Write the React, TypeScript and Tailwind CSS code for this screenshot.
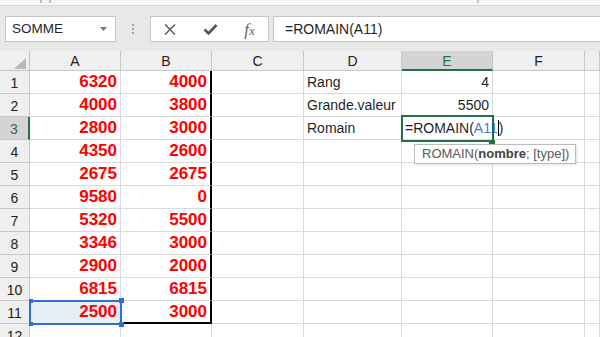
import React from 'react';

const dataA = [6320, 4000, 2800, 4350, 2675, 9580, 5320, 3346, 2900, 6815, 2500];
const dataB = [4000, 3800, 3000, 2600, 2675, 0, 5500, 3000, 2000, 6815, 3000];
const cols = ['A', 'B', 'C', 'D', 'E', 'F', ''];
const labels: Record<number, string> = { 1: 'Rang', 2: 'Grande.valeur', 3: 'Romain' };
const values: Record<number, string> = { 1: '4', 2: '5500' };

function Toolbar() {
  return (
    <div className="h-[51px] bg-[#e8e8e8] flex flex-col shrink-0">
      {/* ribbon edge */}
      <div className="relative h-[6px] overflow-hidden bg-[#f6f6f6] border-b border-[#d6d6d6]">
        <div className="absolute left-[40px] top-0 w-[2px] h-[3px] bg-[#bdbdbd]" />
        <div className="absolute left-[49px] top-0 w-[2px] h-[3px] bg-[#bdbdbd]" />
        <div className="absolute left-[477px] top-0 w-[2px] h-[3px] bg-[#c4c4c4]" />
      </div>

      <div className="flex items-start pt-[10px] pl-[5px]">
        {/* Name box */}
        <div className="w-[111px] h-[26px] bg-white border border-[#c6c6c6] flex items-center justify-between pl-[6px] pr-[8px]">
          <span className="text-[13.5px] text-[#262626]">SOMME</span>
          <svg width="7" height="4" viewBox="0 0 7 4">
            <polygon points="0,0 7,0 3.5,4" fill="#7a7a7a" />
          </svg>
        </div>

        <div className="w-[34px] h-[26px] flex flex-col items-center justify-center gap-[2px]">
          <div className="w-[2px] h-[2px] bg-[#a2a2a2]" />
          <div className="w-[2px] h-[2px] bg-[#a2a2a2]" />
          <div className="w-[2px] h-[2px] bg-[#a2a2a2]" />
        </div>

        {/* Cancel / enter / fx */}
        <div className="w-[119px] h-[26px] bg-white border border-[#c6c6c6] flex items-center justify-around">
          <svg width="12" height="11" viewBox="0 0 12 11">
            <path d="M1 0.5 L11 10.5 M11 0.5 L1 10.5" stroke="#555" strokeWidth="1.4" fill="none" />
          </svg>
          <svg width="15" height="11" viewBox="0 0 15 11">
            <path d="M1.5 5.5 L5.5 9.5 L13.5 1" stroke="#555" strokeWidth="2.6" fill="none" />
          </svg>
          <span className="italic font-['Liberation_Serif',serif] text-[17px] leading-none text-[#666]">
            f<span className="text-[13px]">x</span>
          </span>
        </div>

        {/* Formula bar */}
        <div className="ml-[4px] flex-1 h-[26px] bg-white border border-r-0 border-[#c6c6c6] flex items-center pl-[11px]">
          <span className="text-[14px] text-[#1f1f1f]">=ROMAIN(A11)</span>
        </div>
      </div>
    </div>
  );
}

function cellClass(r: number, c: number) {
  // header row
  if (r === 0) {
    if (c === 0) return 'relative bg-[#efefef] border-r border-b border-[#c4c4c4]';
    if (c === 5)
      return 'bg-[#d4d4d4] text-[#217346] border-r border-[#c4c4c4] border-b-2 border-b-[#217346] flex items-center justify-center pt-[3px] text-[14px]';
    return 'bg-[#efefef] text-[#222] border-r border-b border-[#c8c8c8] flex items-center justify-center pt-[2px] text-[14px]';
  }
  // row header
  if (c === 0) {
    if (r === 3)
      return 'bg-[#d4d4d4] text-[#217346] border-b border-[#c8c8c8] border-r-2 border-r-[#217346] flex items-center justify-center pt-[3px] text-[14px]';
    return 'bg-[#efefef] text-[#222] border-r border-b border-[#c8c8c8] flex items-center justify-center pt-[3px] text-[14px]';
  }
  let cls = 'min-w-0 flex items-center border-r border-b border-[#dadada]';
  if (c === 2 && r <= 11) cls += ' border-r-2 border-r-black';
  if (c === 2 && r === 11) cls += ' border-b-2 border-b-black';
  if (c === 1 && r === 11) cls += ' bg-[#e8eef8]';
  return cls;
}

function CellContent({ r, c }: { r: number; c: number }) {
  if (r === 0) {
    if (c === 0)
      return (
        <svg className="absolute right-[3px] bottom-[1px]" width="12" height="11" viewBox="0 0 12 11">
          <polygon points="12,0 12,11 0,11" fill="#bababa" />
        </svg>
      );
    return <span>{cols[c - 1]}</span>;
  }
  if (c === 0) return <span>{r}</span>;
  if ((c === 1 || c === 2) && r <= 11) {
    const v = c === 1 ? dataA[r - 1] : dataB[r - 1];
    return <span className="w-full text-right pr-[3px] text-[17px] font-bold text-[#ff0000]">{v}</span>;
  }
  if (c === 4 && labels[r]) return <span className="pl-[3px] text-[14px] text-[#1f1f1f] whitespace-nowrap">{labels[r]}</span>;
  if (c === 5 && values[r]) return <span className="w-full text-right pr-[3px] text-[14px] text-[#1f1f1f]">{values[r]}</span>;
  if (c === 5 && r === 3)
    return (
      <span className="pl-[3px] text-[14px] text-[#1f1f1f] whitespace-nowrap flex items-center">
        =ROMAIN(<span className="text-[#3b7bd6]">A11</span>
        <span className="inline-block w-px h-[16px] bg-black" />)
      </span>
    );
  return null;
}

function Sheet() {
  const rows = Array.from({ length: 13 }, (_, i) => i);
  return (
    <div className="relative flex-1 bg-white">
      <div className="grid grid-cols-[30px_91px_91px_92px_98px_91px_92px_1fr] grid-rows-[20px_repeat(12,23px)]">
        {rows.map((r) =>
          [0, 1, 2, 3, 4, 5, 6, 7].map((c) => (
            <div key={`${r}-${c}`} className={cellClass(r, c)}>
              <CellContent r={r} c={c} />
            </div>
          ))
        )}
      </div>

      {/* A11 reference highlight */}
      <div className="absolute left-[29px] top-[249px] w-[93px] h-[25px] border-2 border-[#2f6fd1] pointer-events-none" />
      <div className="absolute left-[29px] top-[248px] w-[4px] h-[4px] bg-[#2f6fd1]" />
      <div className="absolute left-[29px] top-[271px] w-[4px] h-[4px] bg-[#2f6fd1]" />
      <div className="absolute left-[119px] top-[247px] w-[5px] h-[5px] bg-[#2f6fd1]" />
      <div className="absolute left-[119px] top-[271px] w-[5px] h-[5px] bg-[#2f6fd1]" />

      {/* active cell E3 */}
      <div className="absolute left-[401px] top-[64px] w-[93px] h-[27px] border-2 border-[#217346] pointer-events-none" />
      <div className="absolute left-[489px] top-[89px] w-[6px] h-[4px] bg-[#217346]" />

      {/* function tooltip */}
      <div className="absolute left-[414px] top-[93px] w-[162px] h-[20px] bg-white border border-[#bcbcbc] shadow-[1px_1px_2px_rgba(0,0,0,0.12)] flex items-center pl-[7px] text-[13px] text-[#5a5a5a] whitespace-nowrap">
        ROMAIN(<span className="font-bold text-[#444]">nombre</span>; [type])
      </div>
    </div>
  );
}

export default function App() {
  return (
    <div className="w-[600px] h-[337px] overflow-hidden flex flex-col font-['Liberation_Sans',Arial,sans-serif]">
      <Toolbar />
      <Sheet />
    </div>
  );
}
